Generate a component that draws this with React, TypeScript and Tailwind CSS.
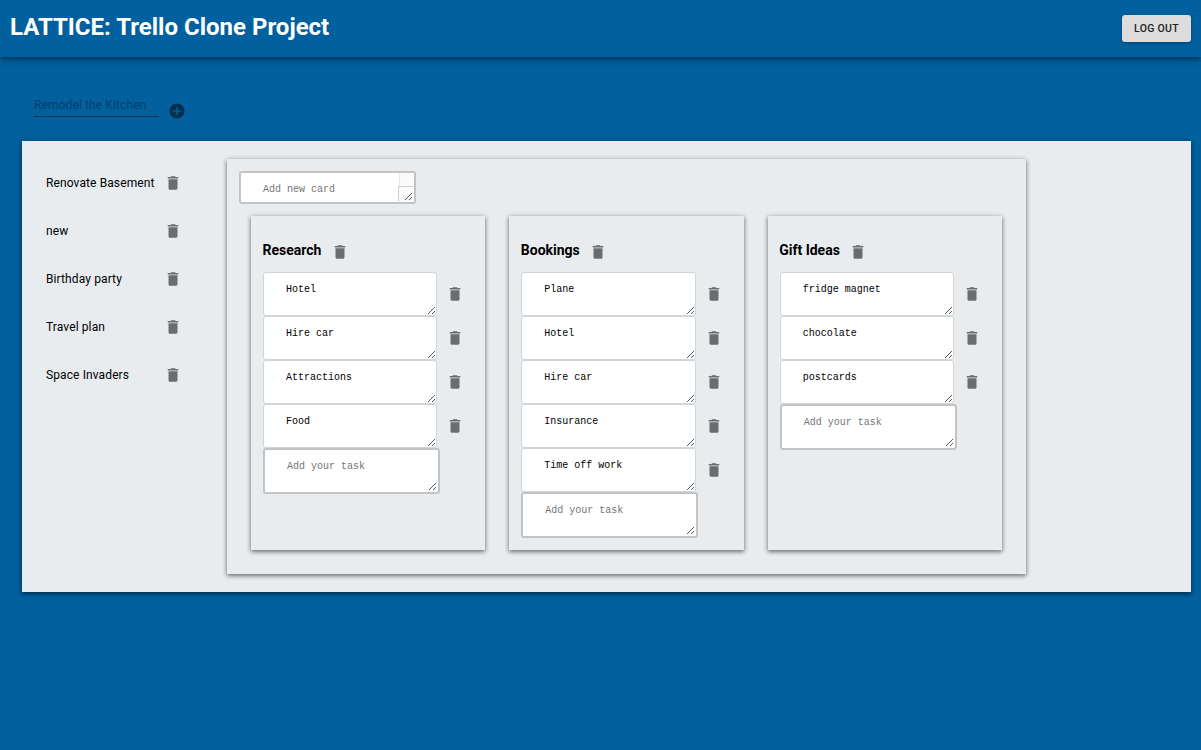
import type { ReactNode } from "react";

const projects = ["Renovate Basement", "new", "Birthday party", "Travel plan", "Space Invaders"];

const lists = [
  { title: "Research", tasks: ["Hotel", "Hire car", "Attractions", "Food"] },
  { title: "Bookings", tasks: ["Plane", "Hotel", "Hire car", "Insurance", "Time off work"] },
  { title: "Gift Ideas", tasks: ["fridge magnet", "chocolate", "postcards"] },
];

function Trash() {
  return (
    <svg className="block size-[18px] shrink-0 fill-[#6b6c6e]" viewBox="0 0 24 24">
      <path d="M6 19c0 1.1.9 2 2 2h8c1.1 0 2-.9 2-2V7H6v12zM19 4h-3.5l-1-1h-5l-1 1H5v2h14V4z" />
    </svg>
  );
}

function Grip({ className }: { className: string }) {
  return (
    <svg className={"absolute size-[7px] " + className} viewBox="0 0 7 7">
      <path d="M0 7L7 0M4 7L7 4" stroke="#444" strokeWidth="0.9" fill="none" />
    </svg>
  );
}

function Paper({ className, children }: { className: string; children: ReactNode }) {
  return (
    <section
      className={
        "bg-[#e8ecef] shadow-[0px_1px_5px_0px_rgba(0,0,0,0.32),0px_2px_4px_0px_rgba(0,0,0,0.32)] " +
        className
      }
    >
      {children}
    </section>
  );
}

function AddTask() {
  return (
    <div className="relative h-[46px] w-[177px] rounded-[3px] border-2 border-[#c3c3c3] bg-white pt-[11px] pl-[22px] font-['Courier_New','Liberation_Mono',monospace] text-[10px] leading-[12px] text-[#757575]">
      Add your task
      <Grip className="right-[2px] bottom-[2px]" />
    </div>
  );
}

export default function App() {
  return (
    <div className="h-[750px] w-full overflow-hidden bg-[#02609e] font-[Roboto,sans-serif]">
      <header className="flex h-[57px] items-start justify-between pr-[10px] pl-[10px] shadow-[0px_2px_4px_-1px_rgba(0,0,0,0.34),0px_4px_5px_0px_rgba(0,0,0,0.16),0px_1px_10px_0px_rgba(0,0,0,0.12)]">
        <h1 className="pt-[12.5px] text-[24px] leading-[29px] font-bold text-white">
          LATTICE: Trello Clone Project
        </h1>
        <button className="mt-[15px] h-[27px] w-[69px] rounded-[3px] bg-[#dcdcdc] text-[10.5px] font-medium tracking-[0.3px] text-[#212121] shadow-[0px_1px_3px_0px_rgba(0,0,0,0.35)]">
          LOG OUT
        </button>
      </header>

      <div className="flex h-[84px] pt-[38px] pl-[34px]">
        <div className="h-[22px] w-[125px] border-b border-[#013252] text-[12px] leading-[20px] tracking-[0.11px] text-[#013f69]">
          Remodel the Kitchen
        </div>
        <svg className="mt-[7px] ml-[9px] block size-[18px] fill-[#02304f]" viewBox="0 0 24 24">
          <path d="M12 2C6.48 2 2 6.48 2 12s4.48 10 10 10 10-4.48 10-10S17.52 2 12 2zm5 11h-4v4h-2v-4H7v-2h4V7h2v4h4v2z" />
        </svg>
      </div>

      <Paper className="mr-[10px] ml-[22px] flex h-[451px] pt-[18px]">
        <ul className="w-[205px] pl-[24px]">
          {projects.map((name) => (
            <li key={name} className="flex h-[48px] items-center">
              <span className="w-[118px] text-[12px] tracking-[0.11px] text-black">{name}</span>
              <Trash />
            </li>
          ))}
        </ul>

        <Paper className="h-[415px] w-[799px] pt-[12px]">
          <div className="relative ml-[12px] h-[33px] w-[177px] rounded-[3px] border-2 border-[#c3c3c3] bg-white pt-[11px] pl-[22px] font-['Courier_New','Liberation_Mono',monospace] text-[10px] leading-[12px] text-[#757575]">
            Add new card
            <span className="absolute top-0 right-0 h-full w-[15px] border-l border-[#e8e8e8] bg-[#fafafa]" />
            <span className="absolute right-[1px] bottom-[1px] h-[15px] w-[15px] border-t border-l border-[#d0d0d0] bg-[#fafafa]" />
            <Grip className="right-[2px] bottom-[2px]" />
          </div>

          <div className="mx-[24px] mt-[12px] grid h-[334px] grid-cols-3 gap-[24px]">
            {lists.map((list) => (
              <Paper key={list.title} className="pt-[12px] pl-[12px]">
                <div className="flex h-[44px] pt-[12px]">
                  <h2 className="-ml-[0.5px] text-[14px] leading-[20px] font-bold text-black">{list.title}</h2>
                  <span className="mt-[3px] ml-[9.5px]">
                    <Trash />
                  </span>
                </div>
                {list.tasks.map((task) => (
                  <div key={task} className="flex h-[44px] items-center">
                    <div className="relative mr-[9px] h-[44px] w-[174.3px] shrink-0 rounded-[3px] border border-[#d5d5d5] bg-white pt-[11px] pl-[22px] font-['Courier_New','Liberation_Mono',monospace] text-[10px] leading-[12px] text-black">
                      {task}
                      <Grip className="right-[1px] bottom-[1px]" />
                    </div>
                    <Trash />
                  </div>
                ))}
                <AddTask />
              </Paper>
            ))}
          </div>
        </Paper>
      </Paper>
    </div>
  );
}
